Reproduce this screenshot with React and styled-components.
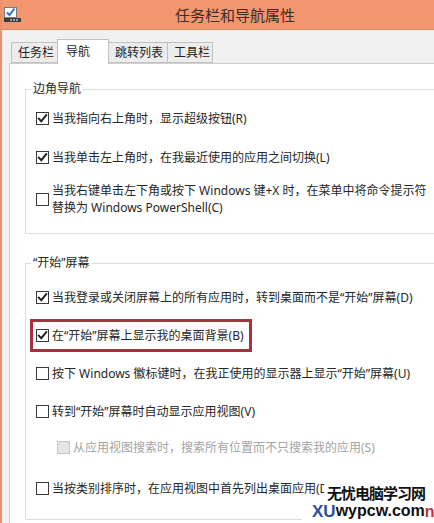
import React from "react";
import styled, { createGlobalStyle } from "styled-components";

const Global = createGlobalStyle`
  html, body { margin: 0; padding: 0; background: #f0f0f0; overflow: hidden; }
  body { font-family: "Noto Sans", "Noto Sans CJK SC", sans-serif; }
`;

const Window = styled.div`
  position: relative;
  width: 466px;
  height: 523px;
  display: flex;
  flex-direction: column;
  background: #f0f0f0;
  border-left: 2px solid #ec9069;
  box-sizing: border-box;
  overflow: hidden;
`;

const TitleBar = styled.div`
  height: 29px;
  flex: none;
  display: grid;
  grid-template-columns: 1fr auto 1fr;
  align-items: center;
  padding-left: 2px;
  background: #f1966f;
  border-bottom: 1px solid #d98a68;
`;

const Title = styled.div`
  font-family: "Noto Sans CJK SC", sans-serif;
  font-size: 15px;
  color: #3a2d26;
  line-height: 29px;
`;

const IconBox = styled.div`
  display: flex;
  align-items: center;
  height: 29px;
`;

const TabStrip = styled.div`
  height: 33px;
  flex: none;
  display: flex;
  align-items: flex-end;
  padding-left: 9px;
  position: relative;
  z-index: 2;
`;

const Tab = styled.div`
  box-sizing: border-box;
  width: ${(p) => p.$w}px;
  height: ${(p) => (p.$active ? 25 : 21)}px;
  margin-left: -1px;
  margin-bottom: ${(p) => (p.$active ? -1 : 0)}px;
  padding: 0 0 ${(p) => (p.$active ? 3 : 1)}px ${(p) => (p.$active ? 8 : 6)}px;
  display: flex;
  align-items: center;
  font-size: 12px;
  color: #222;
  background: ${(p) => (p.$active ? "#ffffff" : "#ececec")};
  border: 1px solid #c2c2c2;
  border-bottom: ${(p) => (p.$active ? "none" : "1px solid #c2c2c2")};
  position: relative;
  z-index: ${(p) => (p.$active ? 2 : 1)};
  &:first-child { margin-left: 0; }
`;

const Panel = styled.div`
  flex: 1;
  margin-left: 7px;
  background: #ffffff;
  border-top: 1px solid #cfcfcf;
  border-left: 1px solid #cfcfcf;
  padding: 17px 10px 0 15px;
  position: relative;
  z-index: 1;
`;

const Group = styled.fieldset`
  margin: ${(p) => p.$mt || 0}px 0 0 0;
  padding: 0 0 ${(p) => p.$pb}px 10px;
  border: 1px solid #dcdcdc;
  min-width: 0;
`;

const Legend = styled.legend`
  margin-left: -5px;
  padding: 0 2px;
  font-size: 12px;
  line-height: 16px;
  color: #262626;
`;

const Row = styled.div`
  position: relative;
  display: flex;
  align-items: center;
  gap: 3px;
  margin-top: ${(p) => p.$mt}px;
  margin-left: ${(p) => p.$indent || 0}px;
  font-size: 12px;
  line-height: 17px;
  color: ${(p) => (p.$disabled ? "#a3a3a3" : "#262626")};
  white-space: nowrap;
  ${(p) =>
    p.$highlight &&
    `
    &::after {
      content: "";
      position: absolute;
      left: -6px;
      top: -8px;
      width: 222px;
      height: 33px;
      box-sizing: border-box;
      border: 3px solid #a3343a;
    }
  `}
`;

const Box = styled.span`
  flex: none;
  width: 13px;
  height: 13px;
  box-sizing: border-box;
  border: 1px solid ${(p) => (p.$disabled ? "#c6c6c6" : "#3a3a3a")};
  background: ${(p) => (p.$disabled ? "#e6e6e6" : "#ffffff")};
  display: flex;
  align-items: center;
  justify-content: center;
`;

const Watermark = styled.div`
  position: absolute;
  left: 300px;
  top: 482px;
  width: 134px;
  height: 41px;
  z-index: 5;
  display: flex;
  flex-direction: column;
`;

const WmTitle = styled.div`
  margin-left: 22px;
  padding-left: 3px;
  height: 19px;
  background: #ffffff;
  font-family: "Noto Sans CJK SC", sans-serif;
  font-weight: 700;
  font-size: 15px;
  line-height: 21px;
  letter-spacing: -1px;
  color: #111;
`;

const WmLogo = styled.div`
  flex: 1;
  background: #ffffff;
  display: flex;
  align-items: flex-end;
  padding: 0 0 3px 10px;
  font-family: "Liberation Sans", sans-serif;
  font-weight: 700;
  white-space: nowrap;
`;

const WmBlue = styled.span`
  font-size: 17px;
  line-height: 18px;
  color: #2c4f99;
`;

const WmBlack = styled.span`
  font-size: 16px;
  line-height: 20px;
  color: #111;
`;

const WmRed = styled.span`
  font-size: 16px;
  line-height: 18px;
  color: #c0323a;
`;

function Check({ checked, disabled }) {
  return (
    <Box $disabled={disabled}>
      {checked && (
        <svg width="11" height="11" viewBox="0 0 11 11">
          <path d="M1.8 5.6 L4.3 8.2 L9.2 2.2" stroke="#1c1c1c" strokeWidth="1.9" fill="none" strokeLinecap="square" />
        </svg>
      )}
    </Box>
  );
}

function Option({ checked, disabled, children, ...rest }) {
  return (
    <Row $disabled={disabled} {...rest}>
      <Check checked={checked} disabled={disabled} />
      <span>{children}</span>
    </Row>
  );
}

function AppIcon() {
  return (
    <svg width="17" height="16" viewBox="0 0 17 16">
      <rect x="0.5" y="0.5" width="12" height="10" fill="#ffffff" stroke="#7a7a7a" />
      <path d="M3 5.5 L5.5 8 L10.5 1.5" stroke="#2a6fcb" strokeWidth="2" fill="none" />
      <rect x="0" y="11" width="17" height="4" fill="#3d3d3d" />
      <rect x="6" y="12" width="2" height="2" fill="#9aa0a8" />
      <rect x="9" y="12" width="2" height="2" fill="#9aa0a8" />
      <rect x="12" y="12" width="2" height="2" fill="#9aa0a8" />
    </svg>
  );
}

export default function App() {
  return (
    <>
      <Global />
      <Window>
        <TitleBar>
          <IconBox>
            <AppIcon />
          </IconBox>
          <Title>任务栏和导航属性</Title>
          <span />
        </TitleBar>
        <TabStrip>
          <Tab $w={47}>任务栏</Tab>
          <Tab $w={52} $active>导航</Tab>
          <Tab $w={60}>跳转列表</Tab>
          <Tab $w={46}>工具栏</Tab>
        </TabStrip>
        <Panel>
          <Group $pb={17}>
            <Legend>边角导航</Legend>
            <Option $mt={13} checked>当我指向右上角时，显示超级按钮(R)</Option>
            <Option $mt={22} checked>当我单击左上角时，在我最近使用的应用之间切换(L)</Option>
            <Option $mt={16}>
              当我右键单击左下角或按下 Windows 键+X 时，在菜单中将命令提示符
              <br />
              替换为 Windows PowerShell(C)
            </Option>
          </Group>
          <Group $mt={21} $pb={22}>
            <Legend>“开始”屏幕</Legend>
            <Option $mt={18} checked>当我登录或关闭屏幕上的所有应用时，转到桌面而不是“开始”屏幕(D)</Option>
            <Option $mt={21} checked $highlight>在“开始”屏幕上显示我的桌面背景(B)</Option>
            <Option $mt={21}>按下 Windows 徽标键时，在我正使用的显示器上显示“开始”屏幕(U)</Option>
            <Option $mt={21}>转到“开始”屏幕时自动显示应用视图(V)</Option>
            <Option $mt={19} $indent={21} disabled>从应用视图搜索时，搜索所有位置而不只搜索我的应用(S)</Option>
            <Option $mt={24}>当按类别排序时，在应用视图中首先列出桌面应用(D)</Option>
          </Group>
        </Panel>
        <Watermark>
          <WmTitle>无忧电脑学习网</WmTitle>
          <WmLogo>
            <WmBlue>XU</WmBlue>
            <WmBlack>wypcw.com</WmBlack>
            <WmRed>n</WmRed>
          </WmLogo>
        </Watermark>
      </Window>
    </>
  );
}
